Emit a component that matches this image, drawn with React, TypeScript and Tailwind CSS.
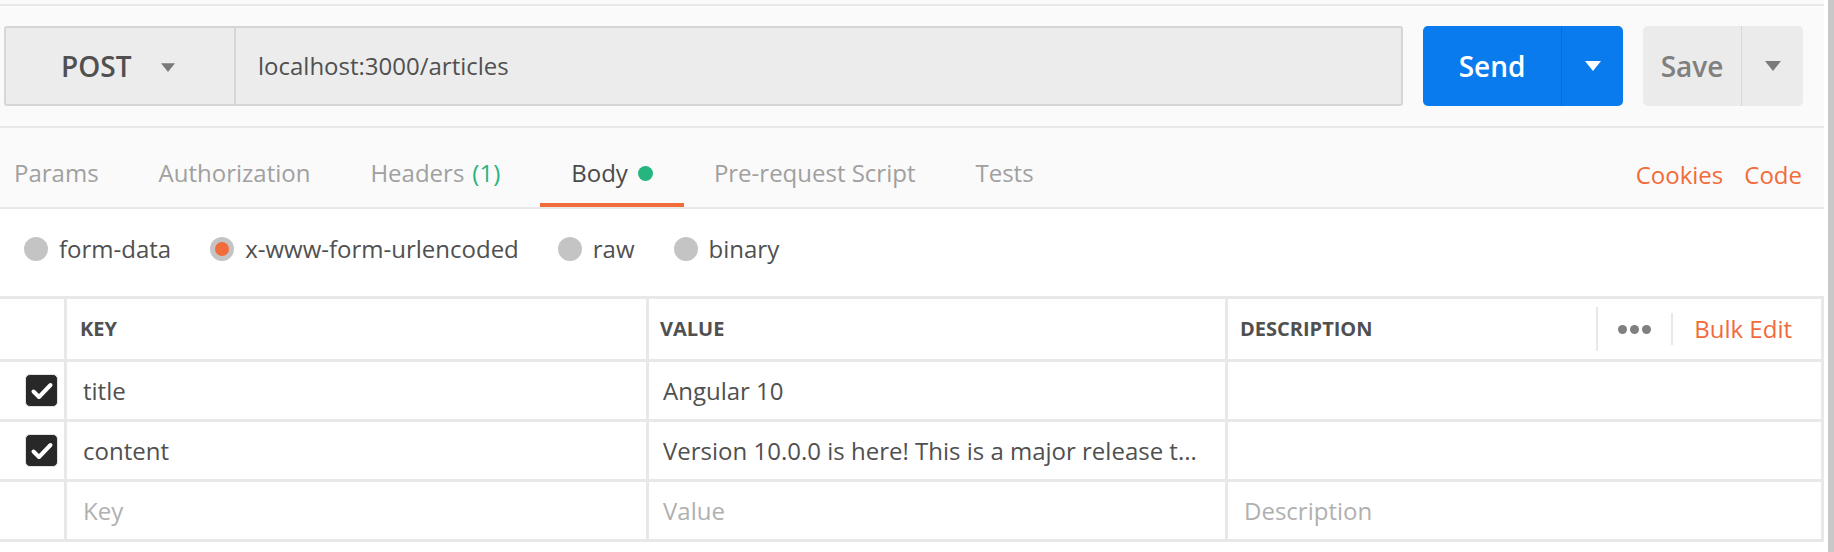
import React from "react";

const Caret = ({ color, w = 16, h = 10 }: { color: string; w?: number; h?: number }) => (
  <svg width={w} height={h} viewBox="0 0 16 10">
    <path d="M0 0 L16 0 L8 10 Z" fill={color} />
  </svg>
);

const Radio = ({ checked }: { checked?: boolean }) => (
  <span className="flex h-[24px] w-[24px] items-center justify-center rounded-full bg-[#c4c4c4]">
    {checked && <span className="h-[14px] w-[14px] rounded-full bg-[#f26b3a]" />}
  </span>
);

const Check = () => (
  <span className="flex h-[33px] w-[33px] items-center justify-center rounded-[5px] border border-[#e2e2e2] bg-[#282828]">
    <svg width="24" height="20" viewBox="0 0 24 20">
      <path d="M3.5 10.5 L9 16 L20.5 4" fill="none" stroke="#ffffff" strokeWidth="4" strokeLinecap="round" strokeLinejoin="round" />
    </svg>
  </span>
);

export default function App() {
  const tabs = [
    { label: "Params", cls: "pl-[14px] pr-[30px]" },
    { label: "Authorization", cls: "px-[30px]" },
    { label: "Headers", cls: "pl-[30px] pr-[40px]", extra: <span className="ml-[8px] text-[#26b47f]">(1)</span> },
  ];
  return (
    <div className="flex h-[552px] w-[1834px] bg-white font-['Open_Sans',sans-serif] text-[24px] text-[#505050]">
      <div className="flex w-[1824px] flex-col">
        <div className="h-[4px] bg-[#fafafa]" />
        {/* request bar */}
        <div className="flex items-center gap-[20px] border-y-2 border-[#e8e8e8] bg-[#fafafa] py-[20px] pl-[4px] pr-[20px]">
          <div className="flex h-[80px] w-[1399px] rounded-[3px] border-2 border-[#d6d6d6] bg-[#ececec]">
            <div className="flex w-[230px] items-center border-r-2 border-[#d6d6d6] pl-[55px]">
              <span className="text-[28px] font-semibold leading-none text-[#505050]">POST</span>
              <span className="ml-[30px] mt-[2px]">
                <Caret color="#7a7a7a" w={14} h={9} />
              </span>
            </div>
            <div className="flex items-center pl-[22px] text-[24px] text-[#505050]">localhost:3000/articles</div>
          </div>
          <div className="flex h-[80px] w-[200px] rounded-[5px] bg-[#097bed]">
            <div className="flex w-[139px] items-center justify-center border-r border-[#0b6bd0] text-[28px] font-semibold text-white">
              Send
            </div>
            <div className="flex flex-1 items-center justify-center">
              <Caret color="#ffffff" />
            </div>
          </div>
          <div className="flex h-[80px] w-[160px] rounded-[5px] bg-[#ebebeb]">
            <div className="flex w-[99px] items-center justify-center border-r border-[#d8d8d8] text-[28px] font-semibold text-[#808080]">
              Save
            </div>
            <div className="flex flex-1 items-center justify-center">
              <Caret color="#7a7a7a" />
            </div>
          </div>
        </div>
        {/* tabs */}
        <div className="flex h-[81px] items-stretch border-b-2 border-[#e8e8e8] bg-[#fafafa]">
          {tabs.map((t) => (
            <div key={t.label} className={`flex items-center pt-[11px] text-[#a0a0a0] ${t.cls}`}>
              {t.label}
              {t.extra}
            </div>
          ))}
          <div className="relative flex items-center px-[31px] pt-[11px] text-[#4a4a4a]">
            Body
            <span className="ml-[10px] h-[15px] w-[15px] rounded-full bg-[#26b47f]" />
            <span className="absolute bottom-0 left-0 right-0 h-[4px] bg-[#f26b3a]" />
          </div>
          <div className="flex items-center px-[30px] pt-[11px] text-[#a0a0a0]">Pre-request Script</div>
          <div className="flex items-center px-[30px] pt-[11px] text-[#a0a0a0]">Tests</div>
          <div className="ml-auto flex items-center gap-[21px] pr-[22px] pt-[14px] text-[#f26b3a]">
            <span>Cookies</span>
            <span>Code</span>
          </div>
        </div>
        {/* radios */}
        <div className="flex h-[87px] items-start gap-[39px] pl-[24px] pt-[28px]">
          {[
            ["form-data", false],
            ["x-www-form-urlencoded", true],
            ["raw", false],
            ["binary", false],
          ].map(([l, c]) => (
            <div key={l as string} className="flex h-[24px] items-center gap-[11px]">
              <Radio checked={c as boolean} />
              <span className="leading-none">{l as string}</span>
            </div>
          ))}
        </div>
        {/* table */}
        <div className="grid grid-cols-[64px_579px_576px_1fr] grid-rows-[60px_57px_57px_57px] gap-[3px] bg-[#e8e8e8] py-[3px] pr-[3px]">
          <div className="bg-white" />
          <div className="flex items-center bg-white pl-[13px] text-[20px] font-bold text-[#505050]">KEY</div>
          <div className="flex items-center bg-white pl-[11px] text-[20px] font-bold text-[#505050]">VALUE</div>
          <div className="flex items-center bg-white pl-[12px] pr-[29px] text-[20px] text-[#505050]">
            <span className="font-bold">DESCRIPTION</span>
            <span className="ml-auto h-[44px] w-[2px] bg-[#e8e8e8]" />
            <span className="mx-[20px] flex gap-[3px]">
              <span className="h-[9px] w-[9px] rounded-full bg-[#808080]" />
              <span className="h-[9px] w-[9px] rounded-full bg-[#808080]" />
              <span className="h-[9px] w-[9px] rounded-full bg-[#808080]" />
            </span>
            <span className="h-[32px] w-[2px] bg-[#e8e8e8]" />
            <span className="ml-[21px] text-[24px] text-[#f26b3a]">Bulk Edit</span>
          </div>

          <div className="flex items-center justify-end bg-white pr-[6px]">
            <Check />
          </div>
          <div className="flex items-center bg-white pl-[16px]">title</div>
          <div className="flex items-center bg-white pl-[14px]">Angular 10</div>
          <div className="bg-white" />

          <div className="flex items-center justify-end bg-white pr-[6px]">
            <Check />
          </div>
          <div className="flex items-center bg-white pl-[16px]">content</div>
          <div className="flex items-center bg-white pl-[14px]">Version 10.0.0 is here! This is a major release t...</div>
          <div className="bg-white" />

          <div className="bg-white" />
          <div className="flex items-center bg-white pl-[16px] text-[#b0b0b0]">Key</div>
          <div className="flex items-center bg-white pl-[14px] text-[#b0b0b0]">Value</div>
          <div className="flex items-center bg-white pl-[16px] text-[#b0b0b0]">Description</div>
        </div>
        <div className="flex-1 bg-white" />
      </div>
      <div className="w-[4px] bg-white" />
      <div className="w-[6px] bg-[#c8c8c8]" />
    </div>
  );
}
